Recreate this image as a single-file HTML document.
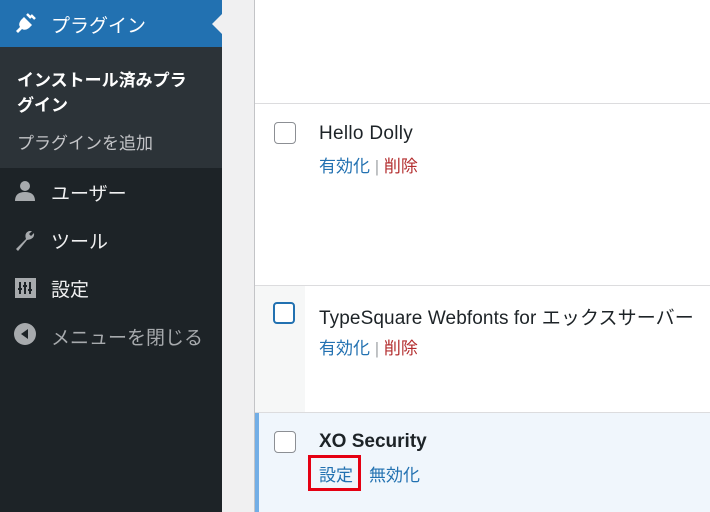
<!DOCTYPE html>
<html><head><style>
*{margin:0;padding:0;box-sizing:border-box}
body{width:710px;height:512px;overflow:hidden;background:#f0f0f1;font-family:"Liberation Sans","Noto Sans CJK JP",sans-serif;position:relative}
.side{position:absolute;left:0;top:0;width:222px;height:512px;background:#1d2327}
.top{position:absolute;left:0;top:0;width:222px;height:47px;background:#2271b1;color:#fff;font-size:19px}
.arrow{position:absolute;left:212px;top:14px;width:0;height:0;border-top:10px solid transparent;border-bottom:10px solid transparent;border-right:10px solid #f0f0f1}
.sub{position:absolute;left:0;top:47px;width:222px;height:121px;background:#2c3338}
.t{position:absolute;white-space:nowrap}
.menu{color:#f0f0f1;font-size:19px}
.ic{position:absolute}
.panel{position:absolute;left:254px;top:0;width:456px;height:512px;background:#fff;border-left:1px solid #c3c4c7}
.hr{position:absolute;left:255px;width:455px;height:1px;background:#dcdcde}
.cb{position:absolute;width:22px;height:22px;border:1.5px solid #8c8f94;border-radius:4px;background:#fff}
.name{position:absolute;font-size:19px;letter-spacing:0.3px;color:#1d2327;white-space:nowrap}
.act{position:absolute;font-size:17px;white-space:nowrap;color:#2271b1}
.del{color:#b32d2e}.sep{color:#a7aaad}
</style></head><body>
<div class="side"></div>
<div class="top">
<svg class="ic" style="left:14px;top:11px" width="24" height="24" viewBox="0 0 24 24"><path d="M10 6 L18 14 L15 17 Q11 20 8 18 L4 22 L2 20 L6 16 Q4 13 7 9Z" fill="#fff"/><path d="M13 3 L17 7 M17 4 L21 8" stroke="#fff" stroke-width="2.5"/></svg>
<span class="t" style="left:51px;top:11px">プラグイン</span>
</div>
<div class="arrow"></div>
<div class="sub"></div>
<span class="t" style="left:17px;top:66px;color:#fff;font-weight:bold;font-size:17px">インストール済みプラ</span>
<span class="t" style="left:17px;top:91px;color:#fff;font-weight:bold;font-size:17px">グイン</span>
<span class="t" style="left:17px;top:129px;color:#c3c4c7;font-size:17px">プラグインを追加</span>
<svg class="ic" style="left:14px;top:180px" width="22" height="22" viewBox="0 0 22 22"><circle cx="11" cy="6" r="5" fill="#a7aaad"/><path d="M1 21 Q1 12 11 12 Q21 12 21 21Z" fill="#a7aaad"/></svg>
<span class="t menu" style="left:51px;top:179px">ユーザー</span>
<svg class="ic" style="left:13px;top:228px" width="24" height="24" viewBox="0 0 24 24"><path d="M3 21 L13 11 Q11 5 16 3 L19 3 L16 6 L18 8 L21 5 Q22 11 14 12 L5 23Z" fill="#a7aaad"/></svg>
<span class="t menu" style="left:51px;top:227px">ツール</span>
<svg class="ic" style="left:15px;top:278px" width="21" height="20" viewBox="0 0 21 20"><rect width="21" height="20" fill="#a7aaad"/><path d="M5 4v12M3 11h4M10 4v12M8 8h4M15 4v12M13 12h4" stroke="#1d2327" stroke-width="2"/></svg>
<span class="t menu" style="left:51px;top:275px">設定</span>
<svg class="ic" style="left:14px;top:323px" width="22" height="22" viewBox="0 0 22 22"><circle cx="11" cy="11" r="11" fill="#a7aaad"/><path d="M7 11 L14 6 L14 16Z" fill="#1d2327"/></svg>
<span class="t" style="left:51px;top:323px;color:#a7aaad;font-size:19px">メニューを閉じる</span>

<div class="panel"></div>
<div class="hr" style="top:103px"></div>
<div class="cb" style="left:274px;top:122px"></div>
<span class="name" style="left:319px;top:123px">Hello Dolly</span>
<span class="act" style="left:319px;top:152px">有効化 <span class="sep">|</span> <span class="del">削除</span></span>

<div class="hr" style="top:285px"></div>
<div style="position:absolute;left:255px;top:286px;width:50px;height:126px;background:#f6f7f7"></div>
<div class="cb" style="left:273px;top:302px;border:2px solid #2271b1"></div>
<span class="name" style="left:319px;top:303px;letter-spacing:0.1px">TypeSquare Webfonts for エックスサーバー</span>
<span class="act" style="left:319px;top:334px">有効化 <span class="sep">|</span> <span class="del">削除</span></span>

<div class="hr" style="top:412px"></div>
<div style="position:absolute;left:255px;top:413px;width:455px;height:99px;background:#f0f6fc"></div>
<div style="position:absolute;left:255px;top:413px;width:4px;height:99px;background:#72aee6"></div>
<div class="cb" style="left:274px;top:431px"></div>
<span class="name" style="left:319px;top:431px;font-weight:bold;letter-spacing:0">XO Security</span>
<span class="act" style="left:319px;top:461px">設定</span>
<span class="act" style="left:369px;top:461px">無効化</span>
<div style="position:absolute;left:308px;top:455px;width:53px;height:36px;border:3px solid #e50012"></div>
</body></html>
